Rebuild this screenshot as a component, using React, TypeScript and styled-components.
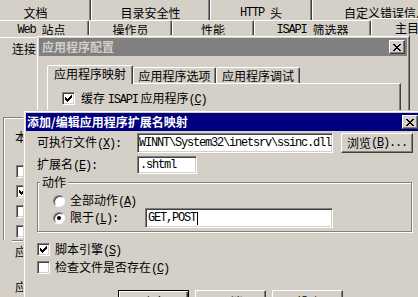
import React from 'react';
import styled, { createGlobalStyle, css } from 'styled-components';

const GlobalStyle = createGlobalStyle`
  html, body { margin: 0; padding: 0; background: #d4d0c8; }
  body {
    font-family: "Noto Sans CJK SC", "Liberation Sans", sans-serif;
    font-size: 12px;
    color: #000;
  }
  * { box-sizing: border-box; }
`;

const FACE = '#d4d0c8';

const Desktop = styled.div`
  position: relative;
  width: 418px;
  height: 297px;
  overflow: hidden;
  background: ${FACE};
`;

const Mono = styled.span`
  font-family: "Liberation Mono", "DejaVu Sans Mono", monospace;
  font-size: 12px;
  letter-spacing: -1.2px;
`;

const Key: React.FC<{ k: string; colon?: boolean; dots?: boolean }> = ({ k, colon, dots }) => (
  <Mono>
    (<u>{k}</u>){colon ? ':' : ''}
    {dots ? '...' : ''}
  </Mono>
);

/* ---------- back property sheet ---------- */

const Sheet = styled.div`
  display: flex;
  flex-direction: column;
  height: 297px;
`;

const SheetRow = styled.div<{ $shift: number; $h: number }>`
  display: flex;
  height: ${p => p.$h}px;
  margin-left: ${p => p.$shift}px;
  white-space: nowrap;
`;

const SheetTab = styled.div<{ $w: number; $upper?: boolean; $active?: boolean }>`
  flex: none;
  width: ${p => p.$w}px;
  display: flex;
  justify-content: center;
  align-items: flex-start;
  line-height: 14px;
  background: ${FACE};
  border-left: 1px solid #fff;
  border-right: 1px solid #404040;
  box-shadow: inset -1px 0 #808080;
  ${p =>
    p.$upper
      ? css`padding-top: 6px;`
      : css`
          border-top: 1px solid #fff;
          border-radius: 2px 2px 0 0;
          padding-top: 2px;
        `}
  ${p =>
    p.$active &&
    css`
      position: relative;
      z-index: 1;
      margin-top: -2px;
      height: 20px;
    `}
`;

const SheetPage = styled.div`
  flex: 1;
  border-top: 1px solid #fff;
  display: flex;
  flex-direction: column;
  align-items: flex-start;
`;

const PageLabel = styled.div<{ $mt: number; $ml: number }>`
  margin: ${p => p.$mt}px 0 0 ${p => p.$ml}px;
  line-height: 14px;
  white-space: nowrap;
`;

const PathGroup = styled.div`
  margin: 61px 0 0 3px;
  width: 60px;
  height: 123px;
  border-top: 1px solid #808080;
  border-left: 1px solid #808080;
  box-shadow: inset 1px 1px #fff;
  padding: 12px 0 0 11px;
  display: flex;
  flex-direction: column;
  align-items: flex-start;
`;

const BackChecks = styled.div`
  margin: 21px 0 0 1px;
  display: flex;
  flex-direction: column;
  gap: 7px;
`;

const AppGroup = styled.div`
  margin-left: 12px;
  width: 60px;
  border-top: 1px solid #808080;
  box-shadow: inset 0 1px #fff;
  padding: 4px 0 0 3px;
  display: flex;
  flex-direction: column;
  align-items: flex-start;
`;

/* ---------- controls ---------- */

const CheckBoxBox = styled.span`
  flex: none;
  width: 13px;
  height: 13px;
  display: inline-flex;
  align-items: center;
  justify-content: center;
  background: #fff;
  border: 1px solid;
  border-color: #808080 #fff #fff #808080;
  box-shadow: inset 1px 1px #404040, inset -1px -1px ${FACE};
`;

const CheckBox: React.FC<{ checked?: boolean }> = ({ checked }) => (
  <CheckBoxBox>
    {checked && (
      <svg width="7" height="7" viewBox="0 0 7 7" shapeRendering="crispEdges">
        <path
          d="M0 2h1v3h-1z M1 3h1v3h-1z M2 4h1v3h-1z M3 3h1v3h-1z M4 2h1v3h-1z M5 1h1v3h-1z M6 0h1v3h-1z"
          fill="#000"
        />
      </svg>
    )}
  </CheckBoxBox>
);

const RadioBox = styled.span`
  flex: none;
  width: 12px;
  height: 12px;
  border-radius: 50%;
  display: inline-flex;
  align-items: center;
  justify-content: center;
  background: #fff;
  border: 1px solid;
  border-color: #808080 #fff #fff #808080;
  box-shadow: inset 1px 1px #404040;
`;

const RadioDot = styled.span`
  width: 4px;
  height: 4px;
  border-radius: 50%;
  background: #000;
`;

const Radio: React.FC<{ checked?: boolean }> = ({ checked }) => (
  <RadioBox>{checked && <RadioDot />}</RadioBox>
);

const CheckRow = styled.div<{ $gap: number }>`
  display: flex;
  align-items: center;
  gap: ${p => p.$gap}px;
  height: 13px;
  line-height: 14px;
  white-space: nowrap;
`;

const CloseBox = styled.span`
  flex: none;
  width: 16px;
  height: 14px;
  display: inline-flex;
  align-items: center;
  justify-content: center;
  background: ${FACE};
  border: 1px solid;
  border-color: #fff #404040 #404040 #fff;
  box-shadow: inset -1px -1px #808080;
`;

const CloseButton = () => (
  <CloseBox>
    <svg width="8" height="7" viewBox="0 0 8 7" shapeRendering="crispEdges">
      <path
        d="M0 0h2v1h-2z M6 0h2v1h-2z M1 1h2v1h-2z M5 1h2v1h-2z M2 2h4v1h-4z M3 3h2v1h-2z M2 4h4v1h-4z M1 5h2v1h-2z M5 5h2v1h-2z M0 6h2v1h-2z M6 6h2v1h-2z"
        fill="#000"
      />
    </svg>
  </CloseBox>
);

const PushButton = styled.button<{ $w: number; $h: number; $default?: boolean }>`
  flex: none;
  width: ${p => p.$w}px;
  height: ${p => p.$h}px;
  padding: 0;
  margin: 0;
  font: inherit;
  line-height: 14px;
  color: #000;
  background: ${FACE};
  display: flex;
  align-items: center;
  justify-content: center;
  white-space: nowrap;
  ${p =>
    p.$default
      ? css`
          border: 1px solid #000;
          box-shadow: inset 1px 1px #fff, inset -1px -1px #404040, inset -2px -2px #808080;
        `
      : css`
          border: 1px solid;
          border-color: #fff #404040 #404040 #fff;
          box-shadow: inset -1px -1px #808080;
        `}
`;

const BrowseButton = styled(PushButton)`
  margin-left: 8px;
`;

const TextBox = styled.div<{ $w: number; $h: number; $end?: boolean }>`
  flex: none;
  width: ${p => p.$w}px;
  height: ${p => p.$h}px;
  background: #fff;
  border: 1px solid;
  border-color: #808080 #fff #fff #808080;
  box-shadow: inset 1px 1px #404040, inset -1px -1px ${FACE};
  display: flex;
  align-items: center;
  justify-content: ${p => (p.$end ? 'flex-end' : 'flex-start')};
  padding: 0 ${p => (p.$end ? 1 : 2)}px 0 2px;
  overflow: hidden;
  white-space: nowrap;
  line-height: 14px;
`;

const Caret = styled.span`
  display: inline-block;
  width: 1px;
  height: 13px;
  background: #000;
  margin-left: 1px;
`;

/* ---------- windows ---------- */

const Window = styled.section<{ $x: number; $y: number; $w: number; $h: number; $z: number }>`
  position: absolute;
  left: ${p => p.$x}px;
  top: ${p => p.$y}px;
  width: ${p => p.$w}px;
  height: ${p => p.$h}px;
  z-index: ${p => p.$z};
  background: ${FACE};
  border: 1px solid;
  border-color: ${FACE} #404040 #404040 ${FACE};
  box-shadow: inset 1px 1px #fff, inset -1px -1px #808080;
  padding: 2px;
  display: flex;
  flex-direction: column;
`;

const TitleBar = styled.header<{ $active?: boolean }>`
  flex: none;
  height: 18px;
  display: flex;
  align-items: center;
  justify-content: space-between;
  padding: 0 2px 0 ${p => (p.$active ? 1 : 3)}px;
  background: ${p => (p.$active ? '#000080' : '#808080')};
  color: ${p => (p.$active ? '#fff' : FACE)};
  font-weight: bold;
  line-height: 14px;
  white-space: nowrap;
`;

const ConfigBody = styled.div`
  padding: 9px 0 0 8px;
  display: flex;
  flex-direction: column;
`;

const TabStrip = styled.div`
  position: relative;
  z-index: 1;
  display: flex;
  align-items: flex-end;
  height: 18px;
`;

const ConfigTab = styled.div<{ $w: number; $selected?: boolean }>`
  flex: none;
  width: ${p => p.$w}px;
  height: ${p => (p.$selected ? 19 : 16)}px;
  margin-bottom: ${p => (p.$selected ? -1 : 0)}px;
  background: ${FACE};
  border: 1px solid;
  border-bottom: none;
  border-color: #fff #404040 transparent #fff;
  box-shadow: inset -1px 0 #808080;
  border-radius: 2px 2px 0 0;
  text-align: center;
  line-height: 14px;
  padding-top: 1px;
  white-space: nowrap;
`;

const TabPage = styled.div`
  width: 354px;
  height: 200px;
  border-top: 1px solid #fff;
  border-left: 1px solid #fff;
  border-right: 1px solid #404040;
  box-shadow: inset -1px 0 #808080;
  padding: 8px 0 0 14px;
`;

const AddBody = styled.div`
  padding: 2px 0 0 11px;
  display: flex;
  flex-direction: column;
  align-items: flex-start;
`;

const FieldRow = styled.div<{ $h: number; $mt?: number }>`
  display: flex;
  align-items: center;
  height: ${p => p.$h}px;
  margin-top: ${p => p.$mt ?? 0}px;
  white-space: nowrap;
`;

const FieldLabel = styled.span<{ $w: number }>`
  flex: none;
  width: ${p => p.$w}px;
  line-height: 14px;
`;

const ActionGroup = styled.fieldset`
  margin: 1px 0 0 0;
  padding: 0;
  width: 375px;
  height: 57px;
  min-inline-size: 0;
  border: 1px solid #808080;
  box-shadow: inset 1px 1px #fff, 1px 1px #fff;
`;

const GroupLegend = styled.legend`
  margin-left: 2px;
  padding: 0 2px;
  line-height: 14px;
  background: ${FACE};
`;

const RadioList = styled.div`
  padding: 5px 0 0 15px;
  display: flex;
  flex-direction: column;
`;

const RadioRow = styled.div<{ $h: number }>`
  display: flex;
  align-items: center;
  gap: 5px;
  height: ${p => p.$h}px;
  white-space: nowrap;
  line-height: 14px;
`;

const OptionList = styled.div`
  margin-top: 11px;
  display: flex;
  flex-direction: column;
  gap: 5px;
`;

const ButtonRow = styled.div`
  margin: 16px 0 0 81px;
  display: flex;
  gap: 6px;
`;

export default function App() {
  return (
    <Desktop>
      <GlobalStyle />
      <Sheet>
        <SheetRow $shift={-20} $h={20}>
          <SheetTab $upper $w={111}>文档</SheetTab>
          <SheetTab $upper $w={119}>目录安全性</SheetTab>
          <SheetTab $upper $w={102}>
            <Mono>HTTP&nbsp;</Mono>头
          </SheetTab>
          <SheetTab $upper $w={148}>自定义错误信息</SheetTab>
        </SheetRow>
        <SheetRow $shift={-6} $h={17}>
          <SheetTab $w={95}>
            <Mono>Web&nbsp;</Mono>站点
          </SheetTab>
          <SheetTab $w={83}>操作员</SheetTab>
          <SheetTab $w={82}>性能</SheetTab>
          <SheetTab $w={117}>
            <Mono>ISAPI&nbsp;</Mono>筛选器
          </SheetTab>
          <SheetTab $w={84} $active>
            主目录
          </SheetTab>
        </SheetRow>
        <SheetPage>
          <PageLabel $mt={4} $ml={12}>连接到</PageLabel>
          <PathGroup>
            <PageLabel $mt={0} $ml={0}>本</PageLabel>
            <BackChecks>
              <CheckBox />
              <CheckBox checked />
              <CheckBox />
              <CheckBox />
            </BackChecks>
          </PathGroup>
          <AppGroup>
            <PageLabel $mt={0} $ml={0}>应用</PageLabel>
            <PageLabel $mt={21} $ml={0}>
              应用程序保护<Key k="N" colon />
            </PageLabel>
          </AppGroup>
        </SheetPage>
      </Sheet>

      <Window $x={36} $y={35} $w={374} $h={300} $z={2}>
        <TitleBar>
          <span>应用程序配置</span>
          <CloseButton />
        </TitleBar>
        <ConfigBody>
          <TabStrip>
            <ConfigTab $w={86} $selected>
              应用程序映射
            </ConfigTab>
            <ConfigTab $w={83}>应用程序选项</ConfigTab>
            <ConfigTab $w={84}>应用程序调试</ConfigTab>
          </TabStrip>
          <TabPage>
            <CheckRow $gap={6}>
              <CheckBox checked />
              <span>
                缓存 <Mono>ISAPI</Mono> 应用程序<Key k="C" />
              </span>
            </CheckRow>
          </TabPage>
        </ConfigBody>
      </Window>

      <Window $x={23} $y={110} $w={400} $h={200} $z={3}>
        <TitleBar $active>
          <span>添加/编辑应用程序扩展名映射</span>
          <CloseButton />
        </TitleBar>
        <AddBody>
          <FieldRow $h={20} $mt={0}>
            <FieldLabel $w={100}>
              可执行文件<Key k="X" colon />
            </FieldLabel>
            <TextBox $w={196} $h={20} $end>
              <Mono>C:\WINNT\System32\inetsrv\ssinc.dll</Mono>
            </TextBox>
            <BrowseButton $w={72} $h={20}>
              浏览<Key k="B" dots />
            </BrowseButton>
          </FieldRow>
          <FieldRow $h={18} $mt={3}>
            <FieldLabel $w={100}>
              扩展名<Key k="E" colon />
            </FieldLabel>
            <TextBox $w={60} $h={18}>
              <Mono>.shtml</Mono>
            </TextBox>
          </FieldRow>
          <ActionGroup>
            <GroupLegend>动作</GroupLegend>
            <RadioList>
              <RadioRow $h={14}>
                <Radio />
                <span>
                  全部动作<Key k="A" />
                </span>
              </RadioRow>
              <RadioRow $h={20}>
                <Radio checked />
                <FieldLabel $w={70}>
                  限于<Key k="L" colon />
                </FieldLabel>
                <TextBox $w={188} $h={20}>
                  <Mono>GET,POST</Mono>
                  <Caret />
                </TextBox>
              </RadioRow>
            </RadioList>
          </ActionGroup>
          <OptionList>
            <CheckRow $gap={5}>
              <CheckBox checked />
              <span>
                脚本引擎<Key k="S" />
              </span>
            </CheckRow>
            <CheckRow $gap={5}>
              <CheckBox />
              <span>
                检查文件是否存在<Key k="C" />
              </span>
            </CheckRow>
          </OptionList>
          <ButtonRow>
            <PushButton $w={71} $h={23} $default>
              确定
            </PushButton>
            <PushButton $w={71} $h={23}>
              取消
            </PushButton>
            <PushButton $w={71} $h={23}>
              帮助
            </PushButton>
          </ButtonRow>
        </AddBody>
      </Window>
    </Desktop>
  );
}
